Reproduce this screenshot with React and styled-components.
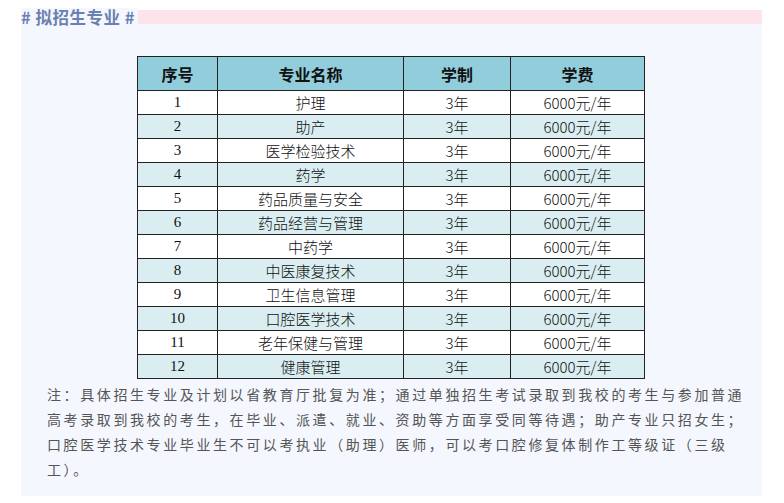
import React from "react";
import styled, { createGlobalStyle } from "styled-components";

const G = createGlobalStyle`
  body { margin:0; background:#fff; font-family:"Noto Sans CJK SC","Liberation Sans",sans-serif; }
`;
const Wrap = styled.div`width:741px;margin-left:21px;padding-top:8px;`;
const TitleRow = styled.div`display:flex;align-items:flex-start;height:16px;`;
const Title = styled.div`font-size:16.5px;font-weight:bold;color:#6b80b0;line-height:19px;padding-right:3px;letter-spacing:0.5px;background:#f4f7fd;`;
const Bar = styled.div`flex:1;height:14px;margin-top:2px;background:#fce4ea;`;
const Panel = styled.div`background:#f4f7fd;padding:32px 0 14px 26px;`;
const Table = styled.table`border-collapse:collapse;margin-left:90px;width:508px;
  font-family:"Noto Sans CJK SC","Liberation Serif",serif;font-size:15px;font-weight:300;color:#111;`;
const Th = styled.th`background:#92cddb;height:33px;border:1.5px solid #222;font-size:16px;font-weight:bold;padding:0;`;
const Td = styled.td`border:1.5px solid #222;height:23px;padding:0;text-align:center;background:${p=>p.$alt?"#daeef2":"#fff"};line-height:23px;`;
const Note = styled.p`margin:3px 0 0;font-size:14px;line-height:25px;color:#555;letter-spacing:2.6px;width:700px;`;

const rows=["护理","助产","医学检验技术","药学","药品质量与安全","药品经营与管理","中药学","中医康复技术","卫生信息管理","口腔医学技术","老年保健与管理","健康管理"];

export default function App(){
  return <><G/><Wrap>
    <TitleRow><Title># 拟招生专业 #</Title><Bar/></TitleRow>
    <Panel>
      <Table>
        <colgroup><col style={{width:80}}/><col style={{width:186}}/><col style={{width:107}}/><col/></colgroup>
        <thead><tr><Th>序号</Th><Th>专业名称</Th><Th>学制</Th><Th>学费</Th></tr></thead>
        <tbody>{rows.map((r,i)=><tr key={i}>
          <Td $alt={i%2===1} style={{fontFamily:"Liberation Serif"}}>{i+1}</Td>
          <Td $alt={i%2===1}>{r}</Td><Td $alt={i%2===1}>3年</Td><Td $alt={i%2===1}>6000元/年</Td>
        </tr>)}</tbody>
      </Table>
      <Note>注：具体招生专业及计划以省教育厅批复为准；通过单独招生考试录取到我校的考生与参加普通高考录取到我校的考生，在毕业、派遣、就业、资助等方面享受同等待遇；助产专业只招女生；口腔医学技术专业毕业生不可以考执业（助理）医师，可以考口腔修复体制作工等级证（三级工）。</Note>
    </Panel>
  </Wrap></>;
}
